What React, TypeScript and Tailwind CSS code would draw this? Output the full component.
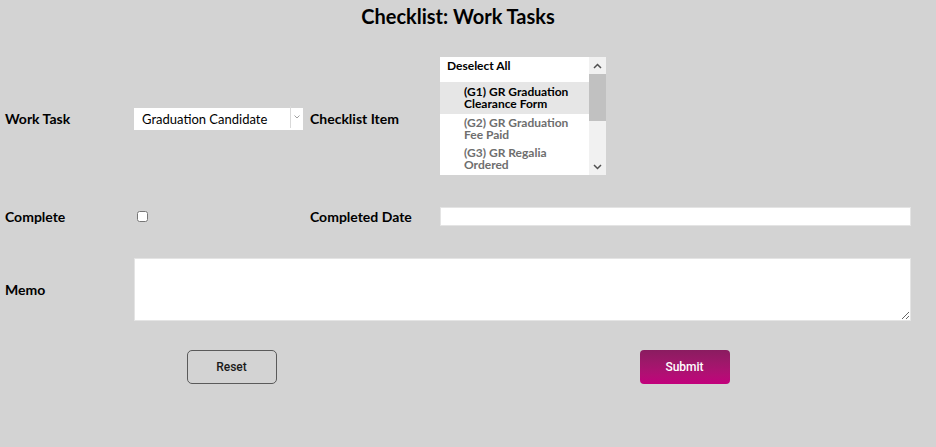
import { useState } from 'react';

const checklistItems = [
  { id: 'G1', label: '(G1) GR Graduation Clearance Form' },
  { id: 'G2', label: '(G2) GR Graduation Fee Paid' },
  { id: 'G3', label: '(G3) GR Regalia Ordered' },
];

const labelCls = "text-[14px] leading-[19px] font-bold text-black font-['Lato','Liberation_Sans',sans-serif]";

function ChecklistBox({ selected, onToggle }: { selected: string[]; onToggle: (id: string) => void }) {
  return (
    <div className="flex h-[118px] w-[166px] overflow-hidden bg-white">
      <div className="flex-1 font-['Lato','Liberation_Sans',sans-serif] text-[12px] font-bold leading-[12px]">
        <div className="h-[25px] px-[7px] pt-[3px] text-black">Deselect All</div>
        {checklistItems.map((item) => {
          const on = selected.includes(item.id);
          return (
            <div
              key={item.id}
              onClick={() => onToggle(item.id)}
              className={
                on
                  ? 'bg-[#e6e6e6] py-[4px] pl-[24px] pr-2 text-black'
                  : 'py-[3px] pl-[24px] pr-2 text-[#6e6e6e]'
              }
            >
              {item.label}
            </div>
          );
        })}
      </div>
      {/* scrollbar */}
      <div className="flex w-[17px] flex-col bg-[#f1f1f1]">
        <div className="flex h-[17px] items-center justify-center">
          <svg width="9" height="6" viewBox="0 0 9 6">
            <path d="M1 5 L4.5 1.5 L8 5" fill="none" stroke="#505050" strokeWidth="1.5" />
          </svg>
        </div>
        <div className="h-[47px] bg-[#c1c1c1]" />
        <div className="flex-1" />
        <div className="flex h-[17px] items-center justify-center">
          <svg width="9" height="6" viewBox="0 0 9 6">
            <path d="M1 1 L4.5 4.5 L8 1" fill="none" stroke="#505050" strokeWidth="1.5" />
          </svg>
        </div>
      </div>
    </div>
  );
}

export default function App() {
  const [selected, setSelected] = useState<string[]>(['G1']);
  const [complete, setComplete] = useState(false);

  const toggle = (id: string) =>
    setSelected((s) => (s.includes(id) ? s.filter((x) => x !== id) : [...s, id]));

  return (
    <div className="min-h-[447px] bg-[#d3d3d3] pl-[5px] pr-[25px]">
      <h1 className="pt-[5px] text-center font-['Lato','Liberation_Sans',sans-serif] text-[20px] font-bold leading-[23px] text-black">
        Checklist: Work Tasks
      </h1>

      <div className="mt-[29px] grid grid-cols-[129px_176px_130px_1fr] items-center">
        {/* Row 1 */}
        <div className={`${labelCls} mt-[4px]`}>Work Task</div>
        <div className="relative mt-[1px] h-[22px] w-[169px]">
          <select className="h-full w-full appearance-none bg-white pl-[8px] font-['Lato','Liberation_Sans',sans-serif] text-[13px] text-black outline-none">
            <option>Graduation Candidate</option>
          </select>
          <div className="pointer-events-none absolute right-0 top-0 flex h-full w-[13px] items-center justify-center border-l border-[#d9d9d9]">
            <svg width="6" height="4" viewBox="0 0 6 4">
              <path d="M0.5 0.5 L3 3 L5.5 0.5" fill="none" stroke="#a0a0a0" strokeWidth="1" />
            </svg>
          </div>
        </div>
        <div className={`${labelCls} mt-[4px]`}>Checklist Item</div>
        <ChecklistBox selected={selected} onToggle={toggle} />

        {/* Row 2 */}
        <div className={`${labelCls} mt-[32px]`}>Complete</div>
        <div className="mt-[32px] flex">
          <input
            type="checkbox"
            checked={complete}
            onChange={(e) => setComplete(e.target.checked)}
            className="ml-[3px] h-[11px] w-[11px]"
          />
        </div>
        <div className={`${labelCls} mt-[32px]`}>Completed Date</div>
        <input type="text" className="mt-[32px] h-[19px] w-full border border-[#e4e4e4] bg-white outline-none" />

        {/* Row 3 */}
        <div className={`${labelCls} mt-[32px]`}>Memo</div>
        <textarea className="col-span-3 mt-[32px] h-[63px] w-full border border-[#e4e4e4] bg-white outline-none" />
      </div>

      <div className="mt-[29px] grid grid-cols-2 font-['Roboto','Liberation_Sans',sans-serif] text-[12px] font-medium">
        <div className="flex justify-center">
          <button className="h-[34px] w-[90px] rounded-[5px] border border-[#5a5a5a] text-[#1a1a1a]">Reset</button>
        </div>
        <div className="flex justify-center">
          <button className="h-[34px] w-[90px] rounded-[4px] bg-gradient-to-b from-[#8a1c60] to-[#c2007c] text-white">
            Submit
          </button>
        </div>
      </div>
    </div>
  );
}
